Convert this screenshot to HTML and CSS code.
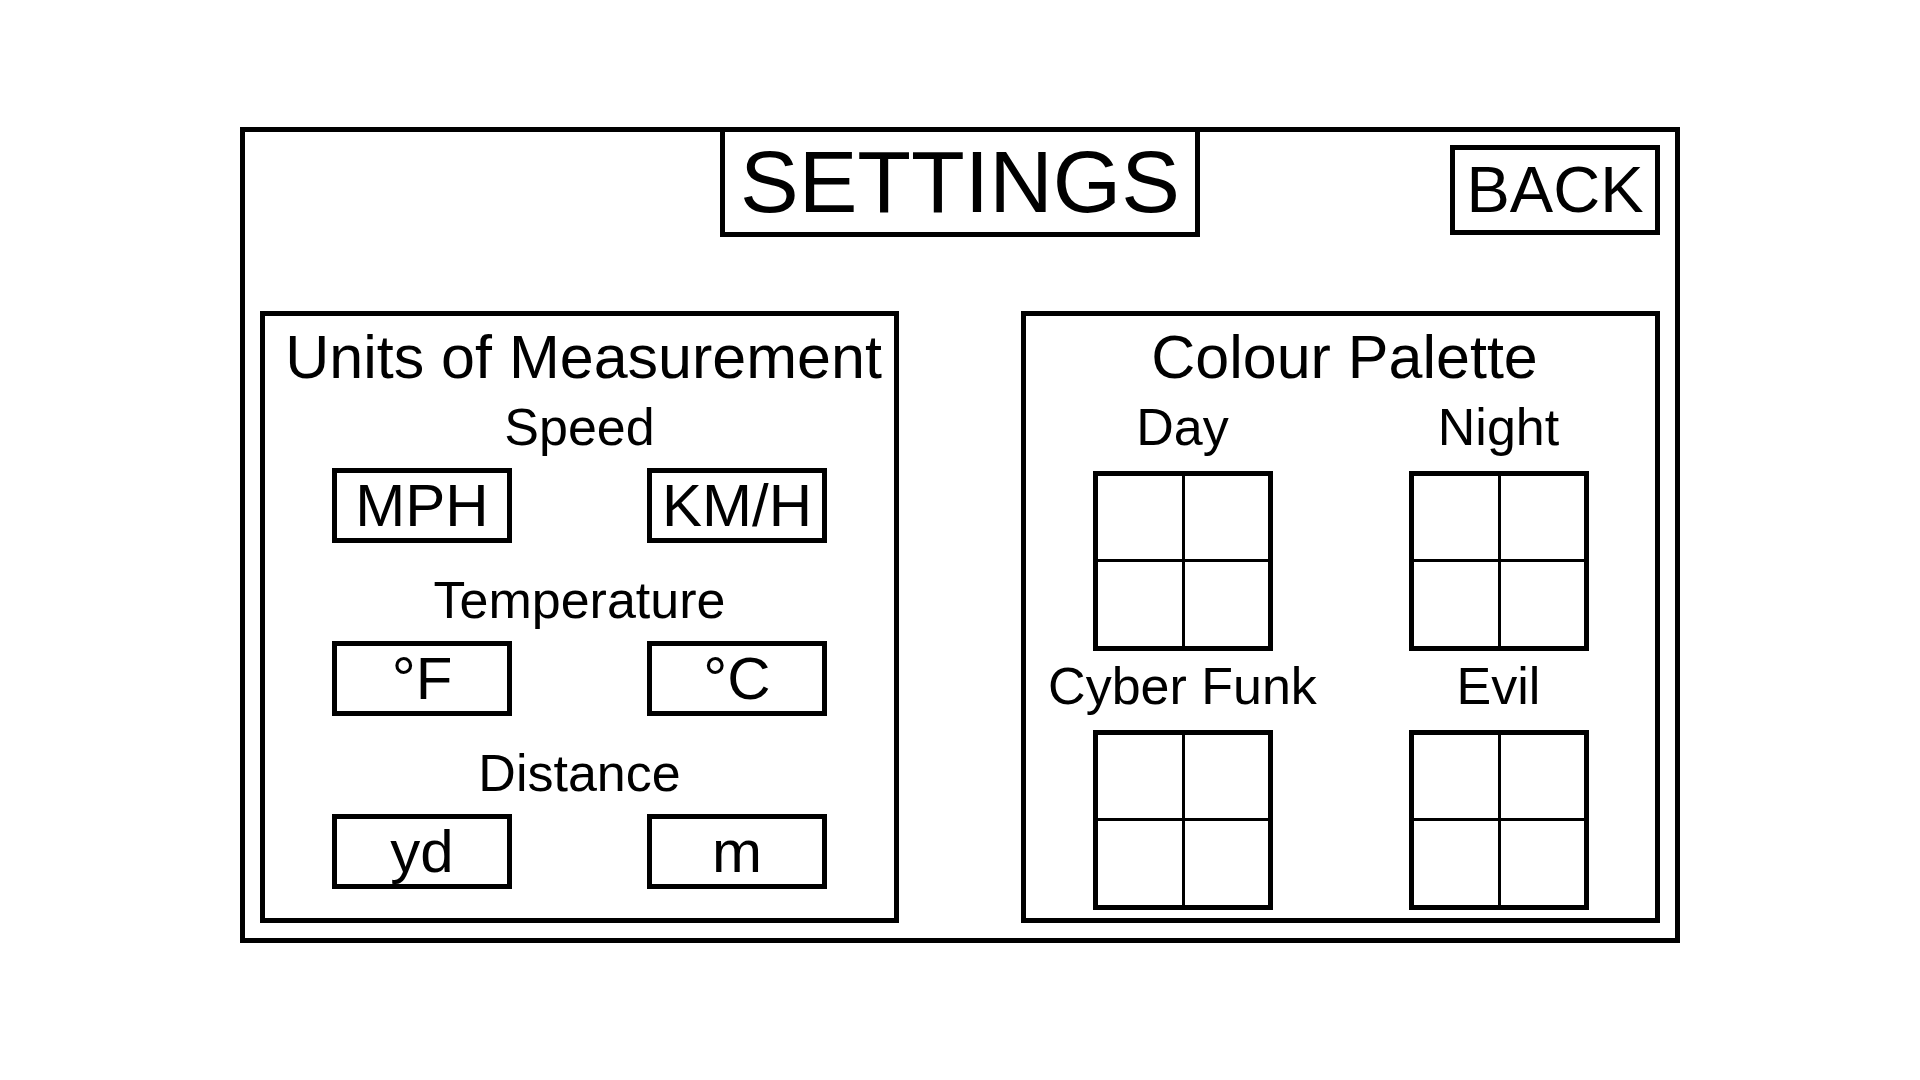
FILE: index.html
```html
<!DOCTYPE html>
<html lang="en">
<head>
  <meta charset="utf-8">
  <meta name="viewport" content="width=device-width, initial-scale=1">
  <title>Settings</title>
  <link rel="stylesheet" href="styles.css">
</head>
<body>
  <main class="screen">
    <header class="header">
      <h1 class="title">SETTINGS</h1>
      <button class="button back" type="button">BACK</button>
    </header>

    <div class="panels">
      <section class="panel" aria-labelledby="units">
        <h2 class="heading" id="units">Units of Measurement</h2>
        <div class="units">
          <div class="unit" role="group" aria-labelledby="speed">
            <h3 class="label" id="speed">Speed</h3>
            <div class="choices">
              <button class="button choice" type="button">MPH</button>
              <button class="button choice" type="button">KM/H</button>
            </div>
          </div>
          <div class="unit" role="group" aria-labelledby="temperature">
            <h3 class="label" id="temperature">Temperature</h3>
            <div class="choices">
              <button class="button choice" type="button">°F</button>
              <button class="button choice" type="button">°C</button>
            </div>
          </div>
          <div class="unit" role="group" aria-labelledby="distance">
            <h3 class="label" id="distance">Distance</h3>
            <div class="choices">
              <button class="button choice" type="button">yd</button>
              <button class="button choice" type="button">m</button>
            </div>
          </div>
        </div>
      </section>

      <section class="panel" aria-labelledby="palette">
        <h2 class="heading" id="palette">Colour Palette</h2>
        <div class="palettes">
          <div class="palette">
            <label class="label" for="day">Day</label>
            <button class="swatch" id="day" type="button"><span></span><span></span><span></span><span></span></button>
          </div>
          <div class="palette">
            <label class="label" for="night">Night</label>
            <button class="swatch" id="night" type="button"><span></span><span></span><span></span><span></span></button>
          </div>
          <div class="palette">
            <label class="label" for="cyber-funk">Cyber Funk</label>
            <button class="swatch" id="cyber-funk" type="button"><span></span><span></span><span></span><span></span></button>
          </div>
          <div class="palette">
            <label class="label" for="evil">Evil</label>
            <button class="swatch" id="evil" type="button"><span></span><span></span><span></span><span></span></button>
          </div>
        </div>
      </section>
    </div>
  </main>
</body>
</html>
```
FILE: styles.css
```css
* {
  box-sizing: border-box;
}

body {
  margin: 0;
  padding: 127px 12.5%;
  background: #fff;
  color: #000;
  font-family: "Liberation Sans", Arial, sans-serif;
}

h1,
h2,
h3 {
  margin: 0;
  font-weight: 400;
}

.screen {
  border: 5px solid #000;
}

/* Header: the title hangs from the frame, Back sits in the right corner */
.header {
  display: grid;
  grid-template-columns: 1fr 480px 1fr;
  align-items: start;
  padding-bottom: 74px;
}

.title {
  grid-column: 2;
  border: solid #000;
  border-width: 0 5px 5px;
  font-size: 88px;
  line-height: 100px;
  text-align: center;
}

.button {
  padding: 0;
  border: 5px solid #000;
  background: #fff;
  color: #000;
  font-family: inherit;
  cursor: pointer;
}

.back {
  justify-self: end;
  width: 210px;
  height: 90px;
  margin: 13px 15px 0 0;
  font-size: 65px;
  line-height: 80px;
}

/* Panels */
.panels {
  display: grid;
  grid-template-columns: 1fr 1fr;
  gap: 122px;
  padding: 0 15px 15px;
}

.panel {
  border: 5px solid #000;
  padding-bottom: 8px;
}

.heading {
  padding-left: 8px;
  font-size: 61px;
  line-height: 82px;
  text-align: center;
  white-space: nowrap;
}

.label {
  font-size: 52px;
  line-height: 58px;
  text-align: center;
  white-space: nowrap;
}

/* Units */
.units {
  display: grid;
  gap: 28px;
}

.unit {
  display: grid;
  gap: 12px;
}

.choices {
  display: flex;
  justify-content: center;
  gap: 135px;
}

.choice {
  width: 180px;
  height: 75px;
  font-size: 60px;
  line-height: 65px;
}

/* Palettes */
.palettes {
  display: grid;
  grid-template-columns: 276px 276px;
  justify-content: center;
  gap: 6px 40px;
}

.palette {
  display: grid;
  justify-items: center;
  gap: 15px;
}

.swatch {
  display: grid;
  grid-template: 83px 1fr / 84px 1fr;
  gap: 3px;
  width: 180px;
  height: 180px;
  padding: 0;
  border: 5px solid #000;
  background: #000;
  cursor: pointer;
}

.swatch span {
  background: #fff;
}

@media (max-width: 1700px) {
  body {
    padding: 40px 16px;
  }

  .panels {
    gap: 40px;
  }
}

@media (max-width: 1360px) {
  .panels {
    grid-template-columns: 1fr;
  }
}
```
